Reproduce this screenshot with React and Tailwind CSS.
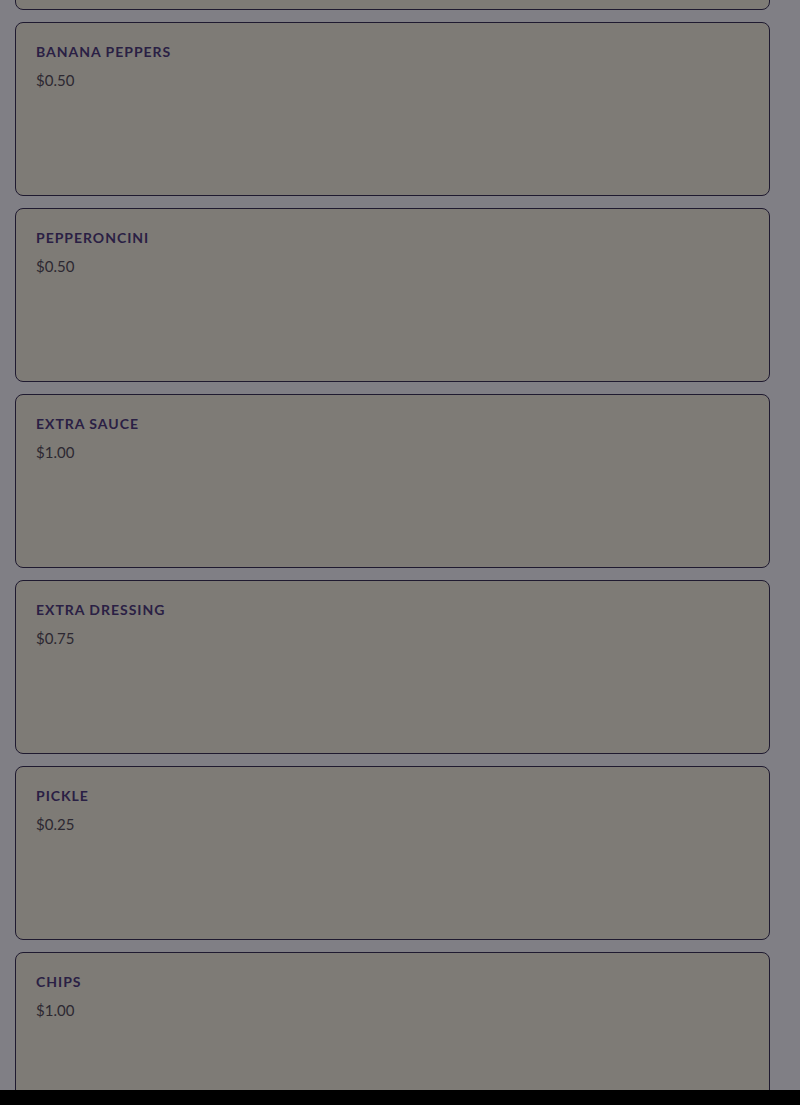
const items = [
  { name: "Extra Cheese", price: "$1.00" },
  { name: "Banana Peppers", price: "$0.50" },
  { name: "Pepperoncini", price: "$0.50" },
  { name: "Extra Sauce", price: "$1.00" },
  { name: "Extra Dressing", price: "$0.75" },
  { name: "Pickle", price: "$0.25" },
  { name: "Chips", price: "$1.00" },
  { name: "Cookie", price: "$1.50" },
];

const App = () => {
  return (
    <div className="h-[1105px] overflow-hidden bg-[#807f85] flex flex-col" style={{ fontFamily: "Lato, 'Open Sans', sans-serif" }}>
      <div className="flex-1 overflow-hidden">
        <div className="mt-[-164px] pl-[15px] pr-[30px] flex flex-col gap-3">
          {items.map((item) => (
            <div
              key={item.name}
              className="h-[174px] shrink-0 rounded-lg border border-[#1f1a30] bg-[#7e7b76] px-5 pt-[19px]"
            >
              <h3 className="text-[14px] font-bold uppercase tracking-[0.07em] text-[#2a2044] leading-5">
                {item.name}
              </h3>
              <p className="mt-2 text-[15px] text-[#2c2831] leading-5">{item.price}</p>
            </div>
          ))}
        </div>
      </div>
      <div className="h-[15px] bg-black shrink-0" />
    </div>
  );
};

export default App;
